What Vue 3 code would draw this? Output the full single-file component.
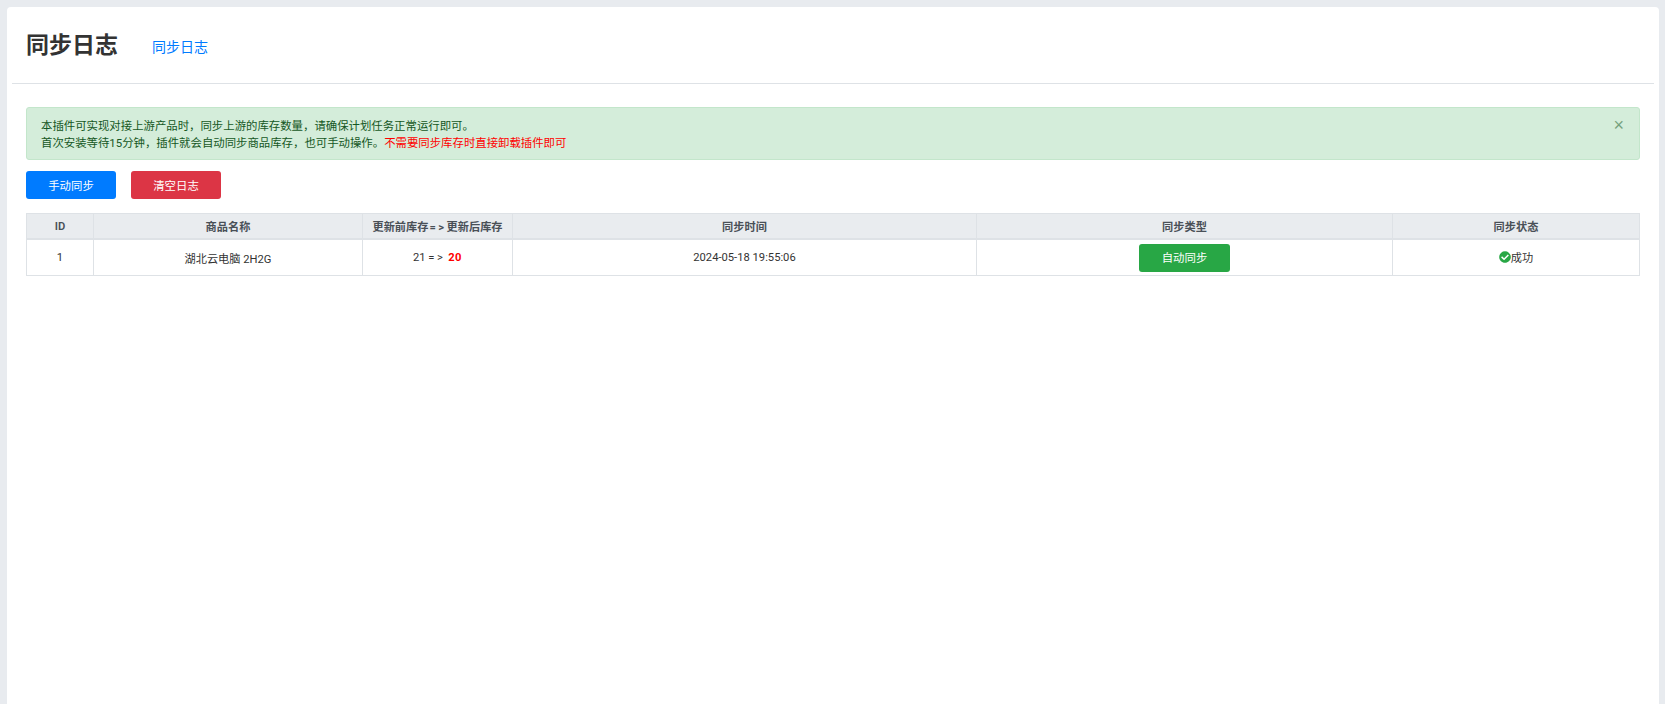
<script setup>
const columns = [
  { text: 'ID' },
  { text: '商品名称' },
  { before: '更新前库存', after: '更新后库存' },
  { text: '同步时间' },
  { text: '同步类型' },
  { text: '同步状态' }
]
</script>

<template>
  <div class="page">
    <div class="card">
      <div class="card-header">
        <h1 class="title">同步日志</h1>
        <a class="tab" href="#">同步日志</a>
      </div>
      <div class="card-body">
        <div class="alert">
          <div>本插件可实现对接上游产品时，同步上游的库存数量，请确保计划任务正常运行即可。</div>
          <div>首次安装等待15分钟，插件就会自动同步商品库存，也可手动操作。<span class="red">不需要同步库存时直接卸载插件即可</span></div>
          <span class="close">×</span>
        </div>
        <div class="toolbar">
          <button class="btn blue">手动同步</button>
          <button class="btn danger">清空日志</button>
        </div>
        <table class="log-table">
          <colgroup>
            <col class="col-id" />
            <col class="col-name" />
            <col class="col-stock" />
            <col class="col-time" />
            <col class="col-type" />
            <col />
          </colgroup>
          <thead>
            <tr>
              <th v-for="(c, i) in columns" :key="i">
                <template v-if="c.text">{{ c.text }}</template>
                <template v-else>{{ c.before }}<span class="arrow head">=></span>{{ c.after }}</template>
              </th>
            </tr>
          </thead>
          <tbody>
            <tr>
              <td>1</td>
              <td>湖北云电脑 2H2G</td>
              <td>21 <span class="arrow">=></span> <b class="red num">20</b></td>
              <td>2024-05-18 19:55:06</td>
              <td><span class="tag">自动同步</span></td>
              <td>
                <span class="status">
                  <svg viewBox="0 0 512 512" width="12" height="12"><path fill="#28a745" d="M504 256c0 137-111 248-248 248S8 393 8 256 119 8 256 8s248 111 248 248zM227 387l184-184c6-6 6-16 0-22l-23-23c-6-6-16-6-22 0L216 308l-70-70c-6-6-16-6-22 0l-23 23c-6 6-6 16 0 22l104 104c6 6 16 6 22 0z" /></svg>成功
                </span>
              </td>
            </tr>
          </tbody>
        </table>
      </div>
    </div>
  </div>
</template>

<style>
html, body {
  margin: 0;
  background: #e8ebef;
}
</style>

<style scoped>
.page {
  box-sizing: border-box;
  height: 704px;
  padding: 7px 6px 0 7px;
  font-family: Roboto, "Noto Sans CJK SC", sans-serif;
  font-size: 11.2px;
  color: #333;
  overflow: hidden;
}
.card {
  height: 697px;
  background: #fff;
  border-radius: 4px 4px 0 0;
}
.card-header {
  display: flex;
  align-items: center;
  height: 76px;
  margin: 0 5px;
  padding: 0 14px;
  border-bottom: 1px solid #dee2e6;
}
.title {
  margin: 0 34px 5px 0;
  font-size: 23px;
  font-weight: 700;
  color: #333;
}
.tab {
  margin-top: 1px;
  color: #007bff;
  font-size: 14px;
  text-decoration: none;
}
.card-body {
  padding: 23px 19px 0;
}
.alert {
  position: relative;
  box-sizing: border-box;
  height: 53px;
  padding: 10px 14px;
  background: #d4edda;
  border: 1px solid #c3e6cb;
  border-radius: 3px;
  color: #155724;
  font-size: 11.4px;
  line-height: 17px;
}
.close {
  position: absolute;
  top: 8px;
  right: 15px;
  font-family: "Liberation Sans", sans-serif;
  font-size: 18px;
  line-height: 18px;
  opacity: 0.5;
}
.red {
  color: #f00;
}
.num {
  letter-spacing: 0.5px;
}
.toolbar {
  display: flex;
  gap: 15px;
  margin-top: 11px;
}
.btn {
  width: 90px;
  height: 28px;
  padding: 0;
  border: 0;
  border-radius: 3px;
  color: #fff;
  font: inherit;
  font-size: 11.4px;
}
.blue {
  background: #007bff;
}
.danger {
  background: #dc3545;
}
.log-table {
  width: 100%;
  margin-top: 14px;
  border-collapse: collapse;
  table-layout: fixed;
  text-align: center;
}
.col-id {
  width: 67px;
}
.col-name {
  width: 269px;
}
.col-stock {
  width: 150px;
}
.col-time {
  width: 464px;
}
.col-type {
  width: 416px;
}
.log-table th, .log-table td {
  padding: 0;
  border: 1px solid #dee2e6;
}
.log-table th {
  height: 24px;
  border-bottom-width: 2px;
  background: #e9ecef;
  color: #495057;
  font-weight: 600;
}
.log-table td {
  height: 35px;
}
.arrow {
  letter-spacing: 2.5px;
}
.head {
  margin-left: 1px;
}
.tag {
  display: inline-block;
  width: 91px;
  line-height: 28px;
  background: #28a745;
  color: #fff;
  border-radius: 3px;
  font-size: 11.4px;
  vertical-align: middle;
}
.status {
  display: inline-flex;
  align-items: center;
}
</style>
